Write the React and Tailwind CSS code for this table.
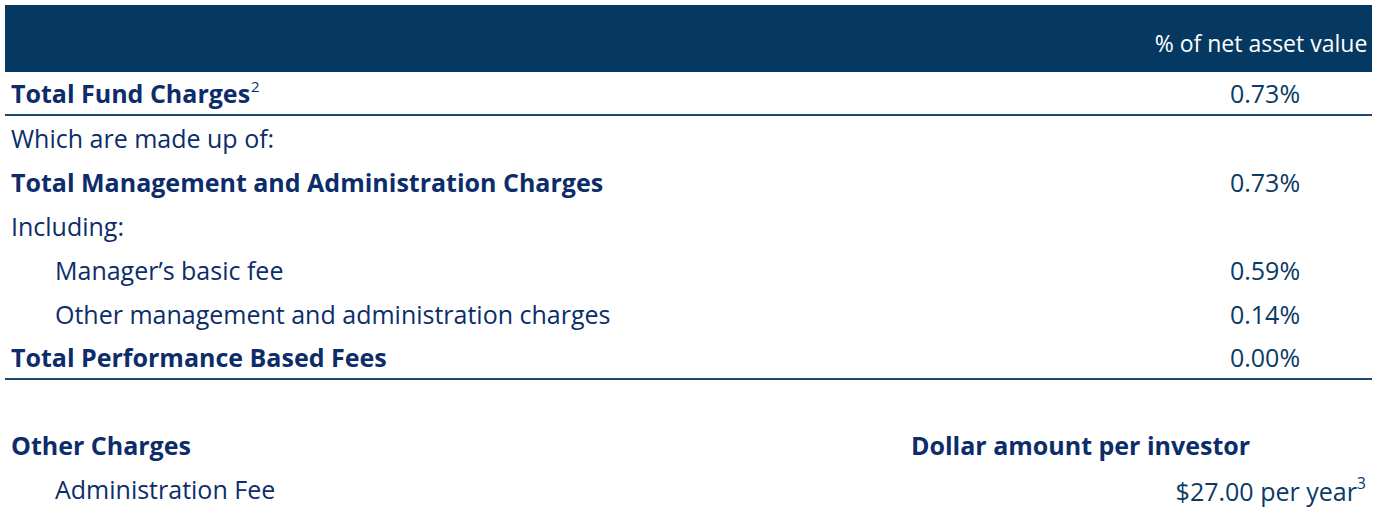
const rows = [
  { label: "Total Fund Charges", sup: "2", value: "0.73%", bold: true, border: true },
  { label: "Which are made up of:" },
  { label: "Total Management and Administration Charges", value: "0.73%", bold: true },
  { label: "Including:" },
  { label: "Manager’s basic fee", value: "0.59%", indent: true },
  { label: "Other management and administration charges", value: "0.14%", indent: true },
  { label: "Total Performance Based Fees", value: "0.00%", bold: true, border: true },
];

function Row({ label, sup, value, bold, indent, border }) {
  return (
    <div
      className={
        "flex items-center h-[44px] " +
        (border ? "border-b-2 border-[#1d4a73]" : "")
      }
    >
      <div
        className={
          "flex-1 text-[#0c2d6a] " +
          (bold ? "font-bold " : "") +
          (indent ? "pl-[50px]" : "pl-[6px]")
        }
      >
        {label}
        {sup && (
          <span className="inline-block align-top text-[15px] font-normal ml-[1px] -mt-[2px]">
            {sup}
          </span>
        )}
      </div>
      <div className="w-[220px] pl-[6px] text-center text-[#0a3a66]">{value}</div>
    </div>
  );
}

export default function App() {
  return (
    <div
      className="bg-white p-[5px] pr-[10px] text-[25px] leading-none"
      style={{ fontFamily: '"Open Sans", "Noto Sans", sans-serif' }}
    >
      <div className="bg-[#053961] h-[67px] flex items-end justify-end pb-[17px]">
        <div className="w-[220px] pr-[2px] text-center text-white text-[23px]">% of net asset value</div>
      </div>

      {rows.map((r, i) => (
        <Row key={i} {...r} />
      ))}

      <div className="mt-[43px]">
        <div className="flex items-center h-[44px]">
          <div className="flex-1 pl-[6px] font-bold text-[#0c2d6a]">Other Charges</div>
          <div className="w-[461px] font-bold text-[#0c2d6a]">Dollar amount per investor</div>
        </div>
        <div className="flex items-center h-[44px]">
          <div className="flex-1 pl-[50px] text-[#0c2d6a]">Administration Fee</div>
          <div className="w-[461px] text-right pr-[6px] pt-[4px] text-[#0a3a66]">
            $27.00 per year
            <span className="inline-block align-top text-[16px] -mt-[4px]">3</span>
          </div>
        </div>
      </div>
    </div>
  );
}
